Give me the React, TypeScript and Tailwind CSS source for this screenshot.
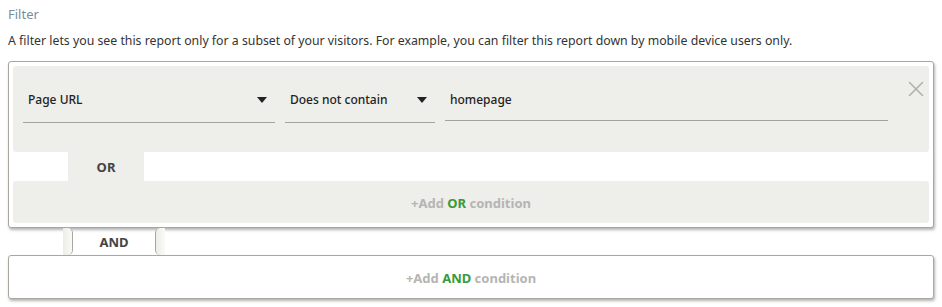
import { X } from 'lucide-react';

const border = 'border-[#aba79f]';

function Caret() {
  return (
    <svg width="10" height="6" viewBox="0 0 10 6" className="shrink-0">
      <path d="M0 0 L10 0 L5 6 Z" fill="#222" />
    </svg>
  );
}

function SelectField({ label, width }: { label: string; width: string }) {
  return (
    <div className={`${width} shrink-0 border-b border-[#a3a3a0] flex items-start justify-between pb-[14px] pl-[5px] pr-[8px]`}>
      <span className="leading-[16px] text-[12px] font-medium text-[#222]">{label}</span>
      <div className="mt-[5px]">
        <Caret />
      </div>
    </div>
  );
}

export default function App() {
  return (
    <div
      className="w-[942px] h-[307px] bg-white px-2 text-[13px] text-[#333] overflow-hidden"
      style={{ fontFamily: '"Noto Sans", "Open Sans", Arial, sans-serif' }}
    >
      <div className="pt-[4px] leading-[20px] text-[#7b8b9b]">Filter</div>
      <p className="mt-[7px] leading-[20px] text-[12.3px]">
        A filter lets you see this report only for a subset of your visitors. For example, you can filter this report down by mobile device users only.
      </p>

      {/* OR group */}
      <div className={`mt-[10px] border ${border} rounded-[3px] p-[4px] bg-white shadow-[1px_2px_3px_rgba(0,0,0,0.3)]`}>
        <div className="bg-[#eeeeea] rounded-[3px] h-[86px] pt-[26px] pl-[10px] flex items-start relative">
          <SelectField label="Page URL" width="w-[252px]" />
          <div className="w-[10px]" />
          <SelectField label="Does not contain" width="w-[150px]" />
          <div className="w-[10px]" />
          <div className="w-[443px] border-b border-[#a3a3a0] pb-[12px] pl-[5px] leading-[16px] text-[12px] font-medium text-[#222]">
            homepage
          </div>
          <button className="absolute right-[0px] top-[10px] text-[#b0b0ae]">
            <X size={26} strokeWidth={1.5} />
          </button>
        </div>
        <div className="flex h-[29px]">
          <div className="ml-[55px] w-[76px] bg-[#eeeeea] pt-[3px] flex items-center justify-center font-bold text-[#444]">
            OR
          </div>
        </div>
        <div className="bg-[#eeeeea] rounded-[3px] h-[42px] pt-[4px] flex items-center justify-center font-bold text-[#b5b5b3]">
          <span>+Add <span className="text-[#3a9a3a]">OR</span> condition</span>
        </div>
      </div>

      {/* AND connector */}
      <div className="flex h-[27px]">
        <div className={`ml-[55px] w-[10px] border-r ${border} rounded-r-[5px] bg-gradient-to-r from-[#ecece8] to-[#fafaf8]`} />
        <div className="w-[82px] pt-[3px] flex items-center justify-center font-bold text-[#444]">AND</div>
        <div className={`w-[10px] border-l ${border} rounded-l-[5px] bg-gradient-to-r from-[#ecece8] to-[#fafaf8]`} />
      </div>

      <div className={`border ${border} rounded-[3px] h-[44px] pt-[4px] bg-white shadow-[1px_2px_3px_rgba(0,0,0,0.3)] flex items-center justify-center font-bold text-[#b5b5b3]`}>
        <span>+Add <span className="text-[#3a9a3a]">AND</span> condition</span>
      </div>
    </div>
  );
}
